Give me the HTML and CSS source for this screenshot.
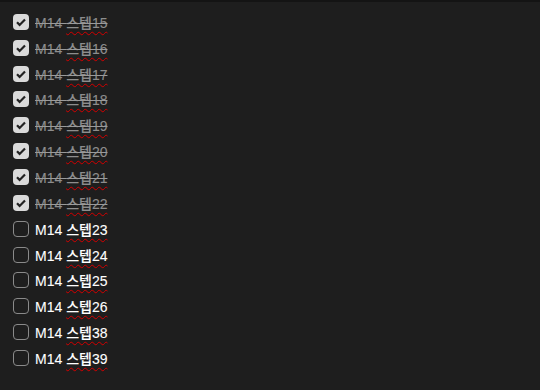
FILE: index.html
```html
<!DOCTYPE html>
<html lang="ko">
<head>
  <meta charset="UTF-8">
  <meta name="viewport" content="width=device-width, initial-scale=1.0">
  <title>Tasks</title>
  <link rel="stylesheet" href="styles.css">
</head>
<body>
  <ul class="task-list">
    <li class="task done"><span class="box"></span><span class="label">M14 <span class="typo">스텝15</span></span></li>
    <li class="task done"><span class="box"></span><span class="label">M14 <span class="typo">스텝16</span></span></li>
    <li class="task done"><span class="box"></span><span class="label">M14 <span class="typo">스텝17</span></span></li>
    <li class="task done"><span class="box"></span><span class="label">M14 <span class="typo">스텝18</span></span></li>
    <li class="task done"><span class="box"></span><span class="label">M14 <span class="typo">스텝19</span></span></li>
    <li class="task done"><span class="box"></span><span class="label">M14 <span class="typo">스텝20</span></span></li>
    <li class="task done"><span class="box"></span><span class="label">M14 <span class="typo">스텝21</span></span></li>
    <li class="task done"><span class="box"></span><span class="label">M14 <span class="typo">스텝22</span></span></li>
    <li class="task"><span class="box"></span><span class="label">M14 <span class="typo">스텝23</span></span></li>
    <li class="task"><span class="box"></span><span class="label">M14 <span class="typo">스텝24</span></span></li>
    <li class="task"><span class="box"></span><span class="label">M14 <span class="typo">스텝25</span></span></li>
    <li class="task"><span class="box"></span><span class="label">M14 <span class="typo">스텝26</span></span></li>
    <li class="task"><span class="box"></span><span class="label">M14 <span class="typo">스텝38</span></span></li>
    <li class="task"><span class="box"></span><span class="label">M14 <span class="typo">스텝39</span></span></li>
  </ul>
</body>
</html>
```
FILE: styles.css
```css
body {
  margin: 0;
  height: 388px;
  background-color: #1e1e1e;
  border-top: 2px solid #141414;
  font-family: "Liberation Sans", "Noto Sans CJK KR", sans-serif;
  font-size: 14px;
  color: #ffffff;
}
.task-list {
  list-style: none;
  margin: 0;
  padding: 7px 0 0 13px;
}
.task {
  display: flex;
  align-items: center;
  gap: 6px;
  height: 25.85px;
}
.box {
  box-sizing: border-box;
  width: 16px;
  height: 16px;
  border: 1.5px solid #8a8a8a;
  border-radius: 4px;
  flex-shrink: 0;
}
.done .box {
  border: none;
  background-color: #dadada;
  background-image: url("data:image/svg+xml;utf8,<svg xmlns='http://www.w3.org/2000/svg' viewBox='0 0 16 16'><path d='M4 8.3l2.6 2.6L12 5.4' fill='none' stroke='%23222' stroke-width='2.2'/></svg>");
}
.label {
  font-weight: 500;
  -webkit-text-stroke: 0.1px currentColor;
}
.done .label {
  color: #8d8d8d;
  text-decoration: line-through;
  text-decoration-color: #9a9a9a;
}
.typo {
  text-decoration: underline wavy #d40000;
  text-decoration-thickness: 1.2px;
  text-underline-offset: 3px;
}
```
